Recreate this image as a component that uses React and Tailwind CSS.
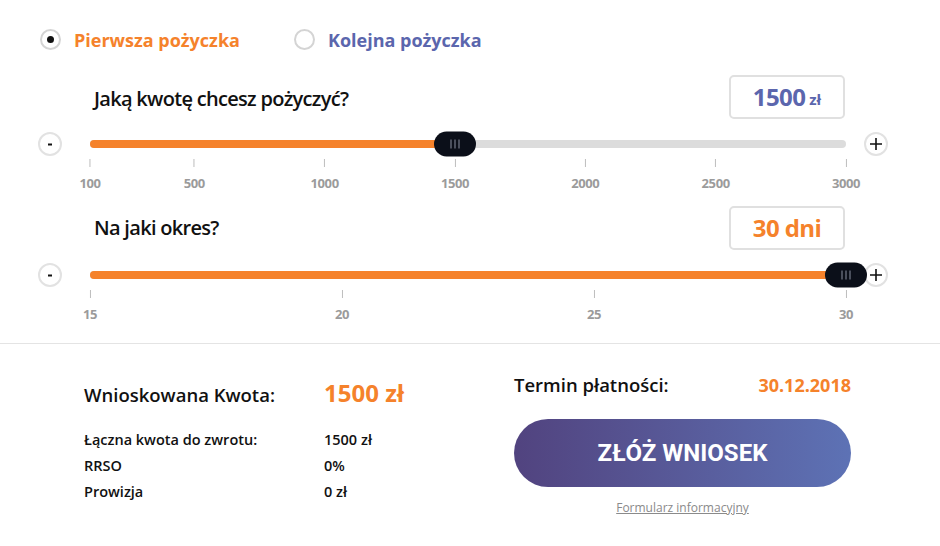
import React, { useState } from 'react';

const ORANGE = 'text-[#f5822b]';

const amountTicks = [100, 500, 1000, 1500, 2000, 2500, 3000];
const dayTicks = [15, 20, 25, 30];

const Radio = ({ checked, label, color, onClick }) => (
  <button onClick={onClick} className="flex items-center gap-[13px]">
    <span className="w-[21px] h-[21px] rounded-full border-2 border-[#d4d4d4] flex items-center justify-center">
      {checked && <span className="w-[7px] h-[7px] rounded-full bg-[#111]" />}
    </span>
    <span className={`text-[18px] font-bold leading-none ${color}`}>{label}</span>
  </button>
);

const RoundBtn = ({ plus, onClick }) => (
  <button
    onClick={onClick}
    className="w-[24px] h-[24px] rounded-full border-2 border-[#e2e2e2] bg-white flex items-center justify-center relative z-10"
  >
    {plus ? (
      <svg width="14" height="14" viewBox="0 0 14 14">
        <path d="M7 1v12M1 7h12" stroke="#111" strokeWidth="1.6" />
      </svg>
    ) : (
      <svg width="14" height="14" viewBox="0 0 14 14">
        <path d="M5 7.5h4" stroke="#111" strokeWidth="2" />
      </svg>
    )}
  </button>
);

const Thumb = () => (
  <div className="w-[42px] h-[25px] rounded-full bg-[#0b0f19] flex items-center justify-center gap-[2px]">
    <span className="w-[2px] h-[9px] bg-[#4a4f5c]" />
    <span className="w-[2px] h-[9px] bg-[#4a4f5c]" />
    <span className="w-[2px] h-[9px] bg-[#4a4f5c]" />
  </div>
);

const Slider = ({ min, max, value, ticks, onChange, step }) => {
  const pct = ((value - min) / (max - min)) * 100;
  return (
    <div>
      <div className="flex items-center h-[25px] pl-[38px]">
        <RoundBtn onClick={() => onChange(Math.max(min, value - step))} />
        <div className="relative w-[756px] ml-[28px] h-[8px] rounded-full bg-[#dcdcdc]">
          <div className="absolute left-0 top-0 h-full rounded-full bg-[#f5822b]" style={{ width: `${pct}%` }} />
          <div className="absolute top-1/2 -translate-y-1/2 -translate-x-1/2 z-20" style={{ left: `${pct}%` }}>
            <Thumb />
          </div>
        </div>
        <div className="ml-[18px]">
          <RoundBtn plus onClick={() => onChange(Math.min(max, value + step))} />
        </div>
      </div>
      <div className="relative ml-[90px] w-[756px] h-[35px] mt-[3px]">
        {ticks.map(t => (
          <div
            key={t}
            className="absolute top-0 -translate-x-1/2 flex flex-col items-center"
            style={{ left: `${((t - min) / (max - min)) * 100}%` }}
          >
            <span className="w-px h-[8px] bg-[#bdbdbd]" />
            <span className="mt-[8px] text-[13px] font-bold leading-4 text-[#9b9b9b] tracking-[-0.4px]">{t}</span>
          </div>
        ))}
      </div>
    </div>
  );
};

const App = () => {
  const [first, setFirst] = useState(true);
  const [amount, setAmount] = useState(1500);
  const [days, setDays] = useState(30);

  return (
    <div className="w-[940px] h-[546px] bg-white overflow-hidden" style={{ fontFamily: '"Open Sans", sans-serif' }}>
      {/* Loan type */}
      <div className="flex items-center gap-[54px] pt-[29px] pl-[40px]">
        <Radio checked={first} label="Pierwsza pożyczka" color={ORANGE} onClick={() => setFirst(true)} />
        <Radio checked={!first} label="Kolejna pożyczka" color="text-[#5b66ad]" onClick={() => setFirst(false)} />
      </div>

      {/* Amount */}
      <div className="flex items-center justify-between pl-[94px] pr-[95px] mt-[25px]">
        <h3 className="text-[20px] font-semibold text-[#111] tracking-[-0.7px] mt-[4px]">Jaką kwotę chcesz pożyczyć?</h3>
        <div className="w-[116px] h-[44px] border-2 border-[#e0e0e0] rounded-[5px] flex items-center justify-center gap-[4px]">
          <span className="text-[24px] font-bold text-[#5b66ad] tracking-[-0.6px]">{amount}</span>
          <span className="text-[15px] font-bold text-[#5b66ad] mt-[4px]">zł</span>
        </div>
      </div>
      <div className="mt-[12px]">
        <Slider min={100} max={3000} value={amount} ticks={amountTicks} step={100} onChange={setAmount} />
      </div>

      {/* Period */}
      <div className="flex items-center justify-between pl-[94px] pr-[95px] mt-[12px]">
        <h3 className="text-[20px] font-semibold text-[#111] tracking-[-0.7px]">Na jaki okres?</h3>
        <div className="w-[116px] h-[44px] border-2 border-[#e0e0e0] rounded-[5px] flex items-center justify-center">
          <span className={`text-[24px] font-bold tracking-[-0.6px] ${ORANGE}`}>{days} dni</span>
        </div>
      </div>
      <div className="mt-[12px]">
        <Slider min={15} max={30} value={days} ticks={dayTicks} step={1} onChange={setDays} />
      </div>

      <div className="h-px bg-[#e4e4e4] mt-[18px]" />

      {/* Summary */}
      <div className="flex pl-[84px] pt-[28px]">
        <div className="w-[430px]">
          <div className="flex items-baseline h-[40px] mt-[3px]">
            <span className="w-[240px] text-[18.5px] font-semibold text-[#111]">Wnioskowana Kwota:</span>
            <span className={`text-[24px] font-bold ${ORANGE}`}>{amount} zł</span>
          </div>
          <div className="mt-[12px] text-[14.5px] font-semibold text-[#111]">
            <div className="flex leading-[26px]">
              <span className="w-[240px]">Łączna kwota do zwrotu:</span>
              <span>{amount} zł</span>
            </div>
            <div className="flex leading-[26px]">
              <span className="w-[240px]">RRSO</span>
              <span>0%</span>
            </div>
            <div className="flex leading-[26px]">
              <span className="w-[240px]">Prowizja</span>
              <span>0 zł</span>
            </div>
          </div>
        </div>
        <div className="w-[337px]">
          <div className="flex items-center h-[26px]">
            <span className="w-[247px] text-[18.5px] font-semibold text-[#111]">Termin płatności:</span>
            <span className={`text-[18px] font-bold ${ORANGE}`}>30.12.2018</span>
          </div>
          <button
            className="mt-[21px] w-[337px] h-[68px] rounded-[34px] bg-gradient-to-r from-[#51437f] to-[#5d72b5] text-white text-[24px] font-bold"
            style={{ fontFamily: 'Roboto, sans-serif' }}
          >
            ZŁÓŻ WNIOSEK
          </button>
          <div className="text-center mt-[7px]">
            <a href="#" className="text-[12px] text-[#8a8a8a] underline">Formularz informacyjny</a>
          </div>
        </div>
      </div>
    </div>
  );
};

export default App;
